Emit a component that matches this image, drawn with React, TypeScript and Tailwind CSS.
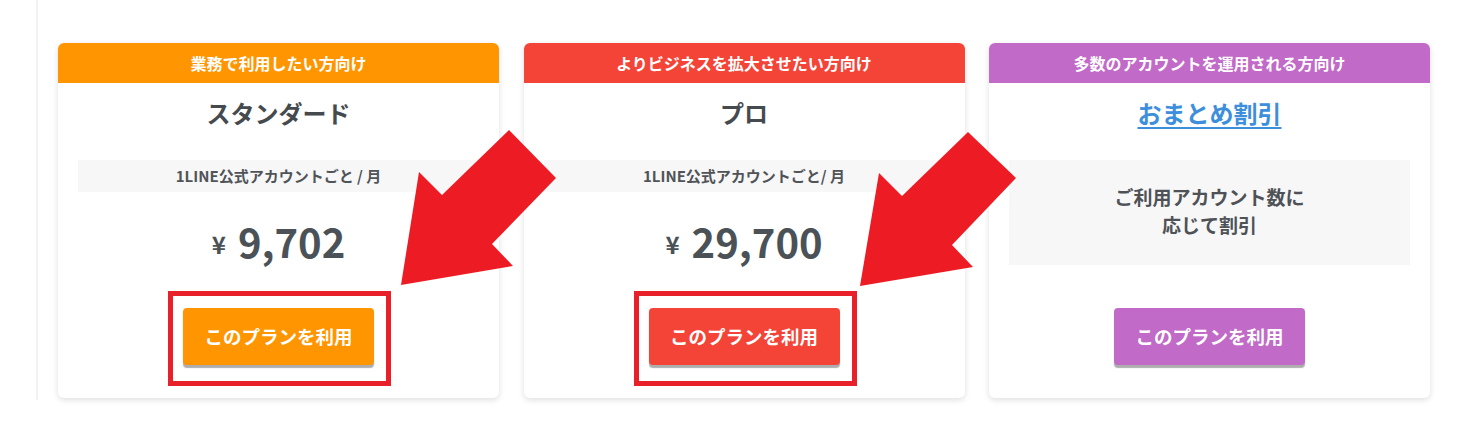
import React from "react";

type Plan = {
  tag: string;
  bg: string;
  title: string;
  link?: boolean;
  band?: string;
  price?: string;
  box?: string[];
  boxed?: boolean;
};

const FONT = { fontFamily: '"Noto Sans CJK JP", "Noto Sans", sans-serif' };

function Card({ p }: { p: Plan }) {
  return (
    <div className="w-[441px] h-[355px] bg-white rounded-[6px] shadow-[0_2px_6px_rgba(0,0,0,0.13)] flex flex-col">
      <div
        className={`h-[40px] rounded-t-[6px] flex items-center justify-center text-white font-bold text-[16px] ${p.bg}`}
      >
        {p.tag}
      </div>
      <div className="h-[60px] flex items-center justify-center">
        {p.link ? (
          <span className="text-[24px] font-bold text-[#3d8fdc] underline underline-offset-[4px] decoration-[2px]">
            {p.title}
          </span>
        ) : (
          <span className="text-[24px] font-bold text-[#454a4e]">{p.title}</span>
        )}
      </div>
      <div className="mt-[17px] h-[130px] mx-[20px] flex flex-col">
        {p.box ? (
          <div className="h-[105px] bg-[#f7f7f7] flex flex-col items-center justify-center text-[19px] leading-[28px] font-bold text-[#4e5256] pb-[4px]">
            {p.box.map((l) => (
              <span key={l}>{l}</span>
            ))}
          </div>
        ) : (
          <>
            <div className="h-[32px] bg-[#f7f7f7] flex items-center justify-center text-[15px] font-bold text-[#505458]">
              {p.band}
            </div>
            <div className="h-[98px] flex items-center justify-center text-[#4b5257] font-bold">
              <span className="text-[24px] mr-[12px] mt-[6px]">¥</span>
              <span className="text-[40px] leading-none">{p.price}</span>
            </div>
          </>
        )}
      </div>
      <div className="mt-[18px] flex justify-center">
        <div className="relative">
          <button
            className={`w-[191px] h-[57px] rounded-[4px] text-white font-bold text-[18.5px] shadow-[0_3px_1px_rgba(0,0,0,0.32)] ${p.bg}`}
            style={FONT}
          >
            このプランを利用
          </button>
          {p.boxed && (
            <div className="absolute left-[-15px] right-[-17px] top-[-17px] bottom-[-21px] border-[5px] border-[#e8202a]" />
          )}
        </div>
      </div>
    </div>
  );
}

export default function App() {
  const plans: Plan[] = [
    {
      tag: "業務で利用したい方向け",
      bg: "bg-[#ff9500]",
      title: "スタンダード",
      band: "1LINE公式アカウントごと / 月",
      price: "9,702",
      boxed: true,
    },
    {
      tag: "よりビジネスを拡大させたい方向け",
      bg: "bg-[#f44438]",
      title: "プロ",
      band: "1LINE公式アカウントごと/ 月",
      price: "29,700",
      boxed: true,
    },
    {
      tag: "多数のアカウントを運用される方向け",
      bg: "bg-[#c16ac8]",
      title: "おまとめ割引",
      link: true,
      box: ["ご利用アカウント数に", "応じて割引"],
    },
  ];
  return (
    <div className="relative w-[1478px] h-[440px] bg-white overflow-hidden" style={FONT}>
      <div className="ml-[36px] h-[400px] border-l-[2px] border-[#f2f2f2] pl-[20px] pt-[43px]">
        <div className="flex gap-[24.5px]">
          {plans.map((p) => (
            <Card key={p.tag} p={p} />
          ))}
        </div>
      </div>
      <svg
        className="absolute left-0 top-0 pointer-events-none"
        width="1478"
        height="440"
        viewBox="0 0 1478 440"
      >
        <polygon
          fill="#ed1c24"
          points="509,130 556,178 492,244 513,266 401,285 419,172 442,195"
        />
        <polygon
          fill="#ed1c24"
          points="968,132 1016,178 952,245 973,267 860,286 879,173 902,196"
        />
      </svg>
    </div>
  );
}
